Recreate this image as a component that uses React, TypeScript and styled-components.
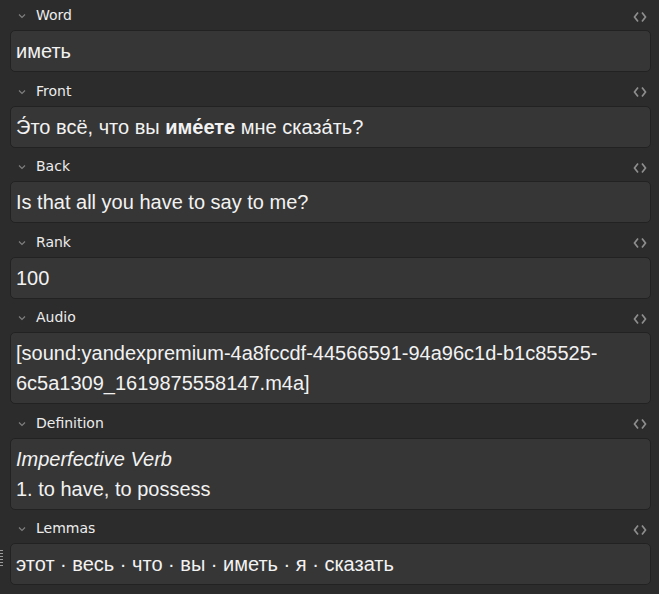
import React from 'react';
import styled, { createGlobalStyle } from 'styled-components';

const GlobalStyle = createGlobalStyle`
  html, body {
    margin: 0;
    padding: 0;
    background: #2c2c2c;
  }
  body {
    font-family: 'DejaVu Sans', sans-serif;
  }
`;

const Editor = styled.div`
  display: flex;
  flex-direction: column;
  gap: 3.5px;
  padding: 0 8px 8px 10px;
  background: #2c2c2c;
  min-height: 594px;
  box-sizing: border-box;
`;

const FieldBlock = styled.div`
  position: relative;
  display: flex;
  flex-direction: column;
`;

const LabelRow = styled.div`
  display: flex;
  align-items: center;
  height: 30px;
  padding-left: 6px;
  padding-right: 3px;
`;

const Collapse = styled.span`
  display: flex;
  width: 12px;
  justify-content: center;
  margin-right: 8px;
  margin-top: 2px;
  color: #808080;
`;

const LabelName = styled.span`
  flex: 1;
  color: #ececec;
  font-size: 14px;
  font-family: 'DejaVu Sans', sans-serif;
`;

const HtmlToggle = styled.span`
  display: flex;
  margin-top: 3px;
  color: #8e8e8e;
`;

const FieldBox = styled.div`
  background: #363636;
  border: 1px solid #222222;
  border-radius: 5px;
  padding: 5px;
  color: #f2f2f2;
  font-family: 'Liberation Sans', Arial, sans-serif;
  font-size: 20px;
  line-height: 30px;
  min-height: 30px;
`;

const Italic = styled.i`
  font-style: italic;
`;

const Grip = styled.div`
  position: absolute;
  left: -10px;
  bottom: 19px;
  width: 3px;
  height: 16px;
  background: repeating-linear-gradient(
    to bottom,
    #9a9a9a 0,
    #9a9a9a 1px,
    transparent 1px,
    transparent 3px
  );
`;

const Chevron = () => (
  <svg width="10" height="8" viewBox="0 0 10 8">
    <polyline points="2,2.5 5,5.5 8,2.5" fill="none" stroke="currentColor" strokeWidth="1.1" />
  </svg>
);

const CodeIcon = () => (
  <svg width="16" height="12" viewBox="0 0 16 12">
    <polyline points="6,1.5 2.5,6 6,10.5" fill="none" stroke="currentColor" strokeWidth="1.7" />
    <polyline points="10,1.5 13.5,6 10,10.5" fill="none" stroke="currentColor" strokeWidth="1.7" />
  </svg>
);

interface IField {
  name: string;
  content: React.ReactNode;
  grip?: boolean;
}

const fields: IField[] = [
  { name: 'Word', content: 'иметь' },
  {
    name: 'Front',
    content: (
      <>
        Э́то всё, что вы <b>име́ете</b> мне сказа́ть?
      </>
    ),
  },
  { name: 'Back', content: 'Is that all you have to say to me?' },
  { name: 'Rank', content: '100' },
  {
    name: 'Audio',
    content: '[sound:yandexpremium-4a8fccdf-44566591-94a96c1d-b1c85525-6c5a1309_1619875558147.m4a]',
  },
  {
    name: 'Definition',
    content: (
      <>
        <Italic>Imperfective Verb</Italic>
        <br />
        1. to have, to possess
      </>
    ),
  },
  { name: 'Lemmas', content: 'этот · весь · что · вы · иметь · я · сказать', grip: true },
];

const App: React.FC = () => {
  return (
    <>
      <GlobalStyle />
      <Editor>
        {fields.map((f) => (
          <FieldBlock key={f.name}>
            <LabelRow>
              <Collapse>
                <Chevron />
              </Collapse>
              <LabelName>{f.name}</LabelName>
              <HtmlToggle>
                <CodeIcon />
              </HtmlToggle>
            </LabelRow>
            <FieldBox>{f.content}</FieldBox>
            {f.grip && <Grip />}
          </FieldBlock>
        ))}
      </Editor>
    </>
  );
};

export default App;
